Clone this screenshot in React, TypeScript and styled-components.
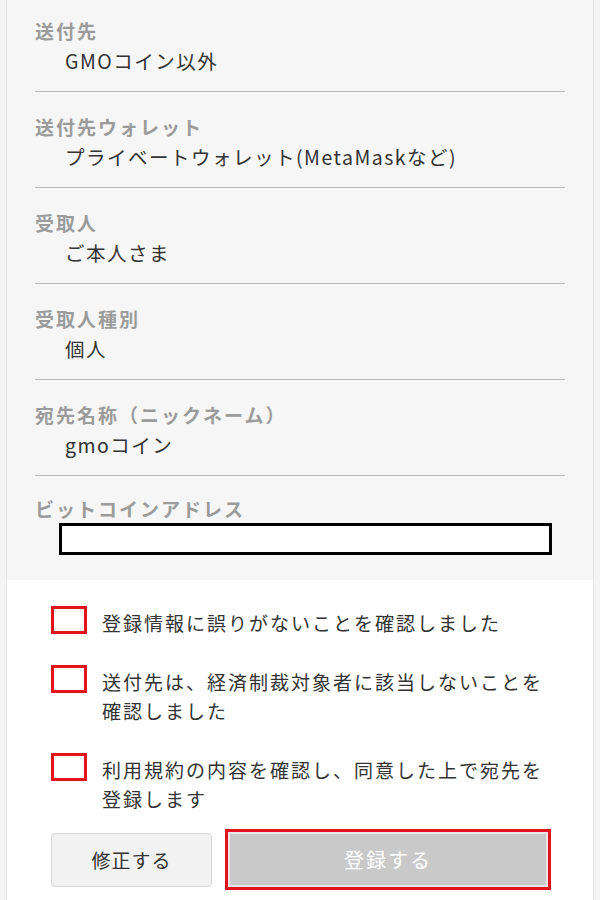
import React from "react";
import styled, { createGlobalStyle } from "styled-components";

const GlobalStyle = createGlobalStyle`
  html, body {
    margin: 0;
    padding: 0;
    background: #f4f4f4;
  }
  body {
    font-family: "Noto Sans CJK JP", "Noto Sans", sans-serif;
  }
`;

interface FieldItem {
  label: string;
  value?: string;
  input?: boolean;
}

const fields: FieldItem[] = [
  { label: "送付先", value: "GMOコイン以外" },
  { label: "送付先ウォレット", value: "プライベートウォレット(MetaMaskなど)" },
  { label: "受取人", value: "ご本人さま" },
  { label: "受取人種別", value: "個人" },
  { label: "宛先名称（ニックネーム）", value: "gmoコイン" },
  { label: "ビットコインアドレス", input: true },
];

const checks = [
  "登録情報に誤りがないことを確認しました",
  "送付先は、経済制裁対象者に該当しないことを確認しました",
  "利用規約の内容を確認し、同意した上で宛先を登録します",
];

const App = () => {
  return (
    <>
      <GlobalStyle />
      <Page>
        <Summary>
          {fields.map((f, i) => (
            <Field key={f.label} $first={i === 0} $last={!!f.input}>
              <Label>{f.label}</Label>
              {f.input ? <AddressBox /> : <Value>{f.value}</Value>}
            </Field>
          ))}
        </Summary>
        <Confirm>
          <CheckList>
            {checks.map((c) => (
              <CheckRow key={c}>
                <CheckBox />
                <CheckText>{c}</CheckText>
              </CheckRow>
            ))}
          </CheckList>
          <ButtonRow>
            <EditButton>修正する</EditButton>
            <SubmitButton disabled>登録する</SubmitButton>
          </ButtonRow>
        </Confirm>
      </Page>
    </>
  );
};

export default App;

const Page = styled.div`
  margin: 0 6px;
  min-height: 900px;
  background: #fff;
  border-left: 1px solid #e3e3e3;
  border-right: 1px solid #e3e3e3;
`;

const Summary = styled.div`
  background: #f6f6f6;
  padding: 0 28px 25px 28px;
`;

const Field = styled.div<{ $first: boolean; $last: boolean }>`
  padding: ${(p) => (p.$first ? "19px" : p.$last ? "21px" : "23px")} 0
    ${(p) => (p.$last ? "0" : "16px")};
  border-bottom: ${(p) => (p.$last ? "none" : "1px solid #b9b9b9")};
`;

const Label = styled.div`
  font-size: 19px;
  line-height: 24px;
  font-weight: 700;
  color: #9b9b9b;
  letter-spacing: 2px;
`;

const Value = styled.div`
  margin-top: 4px;
  padding-left: 30px;
  font-size: 19.5px;
  line-height: 28px;
  color: #333;
  letter-spacing: 1.5px;
`;

const AddressBox = styled.div`
  margin: 2px 0 0 24px;
  width: 493px;
  height: 32px;
  box-sizing: border-box;
  background: #fff;
  border: 3px solid #000;
`;

const Confirm = styled.div`
  padding: 26px 40px 0 44px;
`;

const CheckList = styled.div`
  display: flex;
  flex-direction: column;
  gap: 28px;
`;

const CheckRow = styled.div`
  display: flex;
  align-items: flex-start;
  gap: 15px;
`;

const CheckBox = styled.span`
  flex: none;
  width: 36px;
  height: 28px;
  box-sizing: border-box;
  border: 3px solid #e3131e;
  background: #fff;
`;

const CheckText = styled.div`
  flex: 1;
  font-size: 19px;
  line-height: 29px;
  color: #333;
  letter-spacing: 2px;
  margin-top: 2px;
`;

const ButtonRow = styled.div`
  display: flex;
  align-items: center;
  gap: 13px;
  margin-top: 16px;
  padding-right: 2px;
`;

const EditButton = styled.button`
  width: 161px;
  height: 54px;
  background: #f2f2f2;
  border: 1px solid #d8d8d8;
  border-radius: 4px;
  font-family: inherit;
  font-size: 19px;
  letter-spacing: 1px;
  color: #333;
`;

const SubmitButton = styled.button`
  flex: 1;
  height: 61px;
  background: #c9c9c9;
  border: 3px solid #e3131e;
  box-shadow: inset 0 0 0 2px #e6e6e6;
  font-family: inherit;
  font-size: 20px;
  letter-spacing: 2px;
  color: #fff;
`;
